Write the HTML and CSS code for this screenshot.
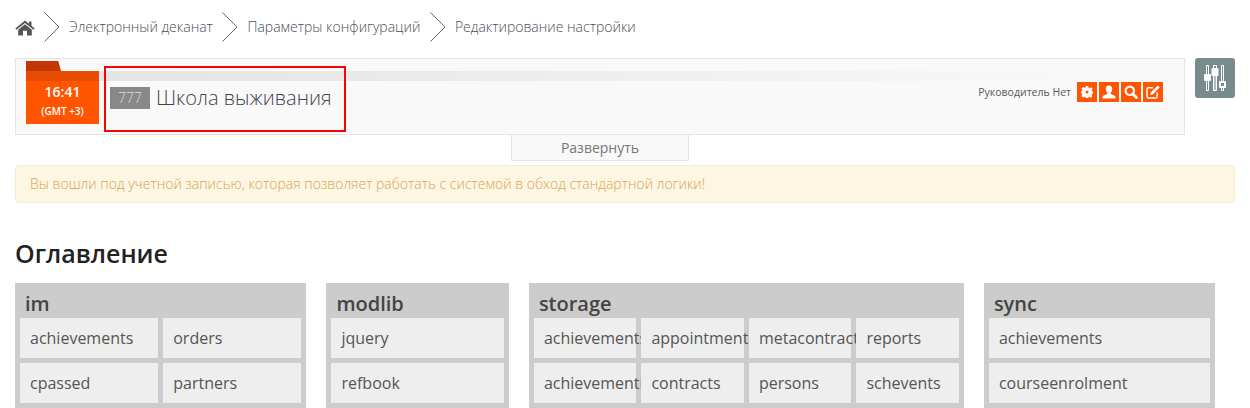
FILE: index.html
```html
<!DOCTYPE html>
<html lang="ru">
<head>
<meta charset="utf-8">
<title>Редактирование настройки</title>
<link rel="stylesheet" href="styles.css">
</head>
<body>
<nav class="crumbs">
  <a class="crumb-home" href="#" aria-label="Главная">
    <svg width="20" height="16" viewBox="0 0 20 16"><path fill="#555" d="M10 0.5 0.3 8.4 1.5 9.8 10 2.9 18.5 9.8 19.7 8.4 16.5 5.8V1.5H14V3.8Z"/><path fill="#555" d="M10 4.3 3.2 9.8V15.5H8V10.8H12V15.5H16.8V9.8Z"/></svg>
  </a>
  <svg class="sep" width="16" height="30" viewBox="0 0 16 30"><path fill="none" stroke="#666" d="M0.5 0.5 15 15 0.5 29.5"/></svg>
  <a class="crumb" href="#">Электронный деканат</a>
  <svg class="sep" width="16" height="30" viewBox="0 0 16 30"><path fill="none" stroke="#666" d="M0.5 0.5 15 15 0.5 29.5"/></svg>
  <a class="crumb" href="#">Параметры конфигураций</a>
  <svg class="sep" width="16" height="30" viewBox="0 0 16 30"><path fill="none" stroke="#666" d="M0.5 0.5 15 15 0.5 29.5"/></svg>
  <span class="crumb">Редактирование настройки</span>
</nav>

<div class="top">
  <section class="panel">
    <div class="folder">
      <div class="folder-tab"></div>
      <div class="folder-band"></div>
      <div class="folder-body">
        <div class="clock">16:41</div>
        <div class="zone">(GMT +3)</div>
      </div>
    </div>
    <div class="panel-main">
      <div class="stripe"></div>
      <div class="panel-row">
        <div class="org">
          <span class="org-code">777</span>
          <span class="org-name">Школа выживания</span>
        </div>
        <div class="role">
          <span class="role-text">Руководитель Нет</span>
          <a class="tool" href="#" aria-label="Настройки">
            <svg width="12" height="12" viewBox="0 0 14 14"><path fill="#fff" fill-rule="evenodd" d="M5.6 0H8.4L8.8 2 10 2.5 11.7 1.4 13.6 3.3 12.5 5 13 6.1 14 6.3V8.9L12.9 9.1 12.4 10.2 13.3 12 11.5 13.7 9.9 12.7 8.8 13.1 8.4 14H5.6L5.3 13 4.1 12.5 2.4 13.6 0.5 11.7 1.6 10 1.1 8.9 0 8.6V6L1.1 5.7 1.6 4.6 0.6 2.9 2.5 1.1 4.2 2.1 5.2 1.7ZM7 5.2A1.8 1.8 0 1 0 7 8.8A1.8 1.8 0 1 0 7 5.2Z"/></svg>
          </a>
          <a class="tool" href="#" aria-label="Пользователь">
            <svg width="14" height="14" viewBox="0 0 14 14"><path fill="#fff" d="M7 0.5C9 0.5 10.2 2 10.2 4 10.2 5.9 9.3 7.3 8.6 8 8.6 9 9.5 9.4 11 9.9 12.6 10.4 13.5 11 13.5 12V13.5H0.5V12C0.5 11 1.4 10.4 3 9.9 4.5 9.4 5.4 9 5.4 8 4.7 7.3 3.8 5.9 3.8 4 3.8 2 5 0.5 7 0.5Z"/></svg>
          </a>
          <a class="tool" href="#" aria-label="Поиск">
            <svg width="14" height="14" viewBox="0 0 14 14"><circle cx="5.8" cy="5.8" r="4.2" fill="none" stroke="#fff" stroke-width="2.2"/><path stroke="#fff" stroke-width="2.8" stroke-linecap="round" d="M9.2 9.2 12.4 12.4"/></svg>
          </a>
          <a class="tool" href="#" aria-label="Редактировать">
            <svg width="14" height="14" viewBox="0 0 14 14"><path fill="none" stroke="#fff" stroke-width="1.5" d="M7 2.8H2.6C1.7 2.8 1 3.5 1 4.4V11.4C1 12.3 1.7 13 2.6 13H9.6C10.5 13 11.2 12.3 11.2 11.4V7.5"/><path fill="#fff" d="M11.6 0.6 13.6 2.6 6.8 9.4 4.3 9.9 4.8 7.4Z"/></svg>
          </a>
        </div>
      </div>
    </div>
    <div class="marked" aria-hidden="true"></div>
  </section>
  <a class="gear" href="#" aria-label="Панель настроек">
    <svg width="24" height="26" viewBox="0 0 24 26"><g fill="none" stroke="#fff"><path d="M3.5 0.5H5.5V25.5H3.5ZM10.5 0.5H13.5V25.5H10.5ZM18.5 0.5H20.5V25.5H18.5Z"/></g><rect x="11" y="6" width="2" height="19" fill="#aebbbd"/><rect x="1" y="9" width="7" height="7" rx="1" fill="#fff"/><rect x="8.5" y="3" width="7" height="8" rx="1" fill="#fff"/><rect x="16" y="16" width="7" height="7" rx="1" fill="#fff"/><rect x="18" y="18" width="3" height="3" fill="#7a8b8e"/></svg>
  </a>
</div>

<div class="toggle-wrap"><a class="toggle" href="#">Развернуть</a></div>

<div class="alert">Вы вошли под учетной записью, которая позволяет работать с системой в обход стандартной логики!</div>

<h2 class="heading">Оглавление</h2>

<div class="cards">
  <section class="card card-im">
    <h3 class="card-title">im</h3>
    <div class="tiles cols-2">
      <a class="tile" href="#">achievements</a><a class="tile" href="#">orders</a>
      <a class="tile" href="#">cpassed</a><a class="tile" href="#">partners</a>
    </div>
  </section>
  <section class="card card-modlib">
    <h3 class="card-title">modlib</h3>
    <div class="tiles">
      <a class="tile" href="#">jquery</a>
      <a class="tile" href="#">refbook</a>
    </div>
  </section>
  <section class="card card-storage">
    <h3 class="card-title">storage</h3>
    <div class="tiles cols-4">
      <a class="tile" href="#">achievements</a><a class="tile" href="#">appointments</a><a class="tile" href="#">metacontracts</a><a class="tile" href="#">reports</a>
      <a class="tile" href="#">achievementins</a><a class="tile" href="#">contracts</a><a class="tile" href="#">persons</a><a class="tile" href="#">schevents</a>
    </div>
  </section>
  <section class="card card-sync">
    <h3 class="card-title">sync</h3>
    <div class="tiles">
      <a class="tile" href="#">achievements</a>
      <a class="tile" href="#">courseenrolment</a>
    </div>
  </section>
</div>
</body>
</html>
```

FILE: styles.css
```css
* { box-sizing: border-box; }
html, body { height: 408px; overflow: hidden; }
body {
  margin: 0;
  padding: 0 15px;
  background: #fff;
  color: #555;
  font-family: "Open Sans", "Noto Sans", sans-serif;
  font-size: 14px;
}
a { color: inherit; text-decoration: none; }

.crumbs {
  display: flex;
  align-items: center;
  height: 58px;
  padding-bottom: 4px;
  color: #4a5058;
  font-weight: 300;
}
.crumb-home { display: flex; width: 29px; padding-top: 1px; }
.sep { flex: none; }
.crumb { margin: 0 9.6px 0 9px; padding-bottom: 2px; }

.top { display: flex; gap: 10px; align-items: flex-start; }
.panel {
  position: relative;
  display: flex;
  width: 1170px;
  height: 77px;
  padding: 2px 10px 0;
  background: #f9f9f9;
  border: 1px solid #e5e5e5;
}
.folder { width: 73px; flex: none; }
.folder-tab {
  width: 35px;
  height: 10px;
  background: #c43505;
  clip-path: polygon(0 0, 92% 0, 100% 100%, 0 100%);
}
.folder-band { height: 10px; background: #e64d00; }
.folder-body {
  height: 43px;
  background: #f50;
  color: #fff;
  text-align: center;
  font-weight: 600;
}
.clock { font-size: 14px; line-height: 20px; padding-top: 1px; height: 23px; }
.zone { font-size: 10px; line-height: 14px; }

.panel-main { flex: 1; padding: 10px 11px 0 0; }
.stripe {
  height: 10px;
  background: linear-gradient(to right, #e4e4e4, #f9f9f9 95%);
}
.panel-row { display: flex; justify-content: space-between; padding-left: 11px; }
.org { display: flex; align-items: center; gap: 6px; padding-top: 6px; }
.org-code {
  width: 40px;
  height: 22px;
  background: #888;
  color: #ddd;
  font-size: 14px;
  font-weight: 300;
  line-height: 22px;
  text-align: center;
}
.org-name { font-size: 20px; font-weight: 300; line-height: 22px; color: #3f444c; }

.role { display: flex; align-items: center; gap: 2px; height: 20px; margin-top: 1px; }
.role-text { font-size: 10.5px; color: #555a63; margin-right: 4px; }
.tool {
  display: flex;
  align-items: center;
  justify-content: center;
  width: 20px;
  height: 20px;
  background: #f50;
}

.marked {
  position: absolute;
  left: 88px;
  top: 7px;
  width: 242px;
  height: 66px;
  border: 2px solid #f00;
}

.gear {
  display: flex;
  align-items: center;
  justify-content: center;
  width: 40px;
  height: 40px;
  border-radius: 3px;
  background: #7a8b8e;
}

.toggle-wrap { width: 1170px; display: flex; justify-content: center; }
.toggle {
  width: 178px;
  height: 26px;
  background: #f9f9f9;
  border: 1px solid #e5e5e5;
  border-top: 0;
  color: #777;
  line-height: 26px;
  text-align: center;
}

.alert {
  width: 1220px;
  height: 38px;
  margin-top: 4px;
  padding: 0 14px;
  background: #fcf6e3;
  border: 1px solid #faebcc;
  border-radius: 4px;
  color: #d9a54f;
  font-weight: 300;
  line-height: 36px;
}

.heading {
  margin: 31px 0 0;
  height: 49px;
  color: #222;
  font-size: 25px;
  font-weight: 600;
  line-height: 39px;
}

.cards { display: flex; gap: 20px; align-items: flex-start; }
.card { padding: 0 5px 5px; background: #ccc; flex: none; }
.card-im { width: 291.45px; }
.card-modlib { width: 182.45px; }
.card-storage { width: 435px; }
.card-sync { width: 231px; }
.card-title {
  margin: 0;
  height: 35px;
  padding-left: 5px;
  color: #444;
  font-size: 20px;
  font-weight: 600;
  line-height: 42px;
}
.tiles { display: grid; gap: 5px; }
.cols-2 { grid-template-columns: repeat(2, 1fr); }
.cols-4 { grid-template-columns: repeat(4, 1fr); }
.tile {
  position: relative;
  height: 40px;
  min-width: 0;
  padding: 0 10px;
  background: #eee;
  color: #555;
  font-size: 16px;
  line-height: 40px;
  white-space: nowrap;
}
```
